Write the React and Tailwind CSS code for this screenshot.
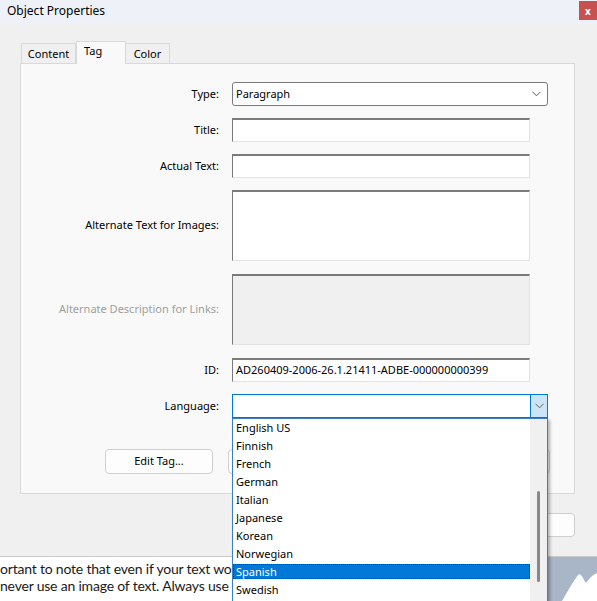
import React from "react";

const languages = [
  "English US",
  "Finnish",
  "French",
  "German",
  "Italian",
  "Japanese",
  "Korean",
  "Norwegian",
  "Spanish",
  "Swedish",
];

function Chevron({ className = "" }) {
  return (
    <svg width="9" height="6" viewBox="0 0 9 6" className={className}>
      <path d="M0.5 0.8 L4.5 4.8 L8.5 0.8" fill="none" stroke="#5f5f5f" strokeWidth="1" />
    </svg>
  );
}

function Field({ label, disabled, children, className = "" }) {
  return (
    <div className={`flex items-center ${className}`}>
      <div className={`w-[199px] text-right pr-px ${disabled ? "text-[#a0a0a0]" : "text-black"}`}>{label}</div>
      <div className="ml-[12px]">{children}</div>
    </div>
  );
}

function SunkenBox({ h = "h-[24px]", disabled, children }) {
  return (
    <div
      className={`w-[298px] ${h} border-t-2 border-l border-r border-b border-t-[#7a7a7a] border-l-[#7a7a7a] border-r-[#e3e3e3] border-b-[#e3e3e3] ${
        disabled ? "bg-[#f0f0f0]" : "bg-white"
      } px-[3px] flex items-center`}
    >
      {children}
    </div>
  );
}

function LanguageList() {
  return (
    <div className="absolute left-0 top-full w-[316px] h-[200px] bg-white border border-[#3b7fc0] shadow-[2px_2px_3px_rgba(0,0,0,0.3)] z-20 flex">
      <div className="flex-1">
        {languages.map((l) => (
          <div key={l} className="h-[18px] pt-[1px]">
            {l === "Spanish" ? (
              <div className="h-[15px] leading-[13px] pl-[2px] bg-[#0078d7] text-white border border-dotted border-[#1b3b5c]">{l}</div>
            ) : (
              <div className="h-[15px] leading-[15px] pl-[3px]">{l}</div>
            )}
          </div>
        ))}
      </div>
      <div className="w-[17px] bg-[#f0f0f0] flex justify-center">
        <div className="w-[3px] h-[91px] mt-[72px] rounded-full bg-[#888888]" />
      </div>
    </div>
  );
}

export default function App() {
  return (
    <div className="w-[597px] h-[601px] overflow-hidden bg-white font-['Noto_Sans',sans-serif] text-[11px] text-black flex flex-col">
      <div className="h-[557px] shrink-0 flex flex-col bg-[#f0f0f0] border-b border-[#c9c9c9]">
        <div className="h-[23px] shrink-0 flex justify-between bg-[#eef2f8]">
          <span className="pl-[7px] pt-[2px] text-[12px]">Object Properties</span>
          <div className="w-[18px] h-[19px] mt-px bg-[#c75050] text-white font-bold text-[10px] flex items-center justify-center leading-none">
            x
          </div>
        </div>

        <div className="flex-1 pl-[20px] pr-[22px] pt-[18px] flex flex-col">
          <div className="h-[22px] flex items-end pl-px">
            <div className="h-[20px] w-[55px] border border-b-0 border-[#d9d9d9] bg-[#f0f0f0] flex items-center justify-center pt-px">
              Content
            </div>
            <div className="h-[23px] w-[50px] -mb-px relative z-10 border border-b-0 border-[#d9d9d9] bg-[#f9f9f9] pl-[7px] pt-[1px]">
              Tag
            </div>
            <div className="h-[20px] w-[44px] border border-b-0 border-l-0 border-[#d9d9d9] bg-[#f0f0f0] flex items-center justify-center pt-px">
              Color
            </div>
          </div>

          <div className="h-[431px] border border-[#d9d9d9] bg-[#f9f9f9] pt-[18px]">
            <Field label="Type:">
              <div className="w-[316px] h-[24px] border border-[#7a7a7a] rounded-[3px] bg-white flex items-center justify-between pl-[3px] pr-[6px]">
                <span>Paragraph</span>
                <Chevron />
              </div>
            </Field>
            <Field label="Title:" className="mt-[12px]">
              <SunkenBox />
            </Field>
            <Field label="Actual Text:" className="mt-[12px]">
              <SunkenBox />
            </Field>
            <Field label="Alternate Text for Images:" className="mt-[12px]">
              <SunkenBox h="h-[71px]" />
            </Field>
            <Field label="Alternate Description for Links:" disabled className="mt-[13px]">
              <SunkenBox h="h-[71px]" disabled />
            </Field>
            <Field label="ID:" className="mt-[13px]">
              <SunkenBox>
                <span>AD260409-2006-26.1.21411-ADBE-000000000399</span>
              </SunkenBox>
            </Field>
            <Field label="Language:" className="mt-[12px]">
              <div className="relative">
                <div className="w-[316px] h-[24px] border border-[#0078d4] bg-white flex justify-end">
                  <div className="w-[17px] h-full bg-[#cce4f7] border-l border-[#0078d4] flex items-center justify-center">
                    <Chevron />
                  </div>
                </div>
                <LanguageList />
              </div>
            </Field>
            <div className="mt-[31px] pl-[84px] flex gap-[15px]">
              <div className="w-[108px] h-[25px] rounded-[4px] border border-[#cfcfcf] bg-[#fdfdfd] flex items-center justify-center">
                Edit Tag...
              </div>
              <div className="w-[322px] h-[25px] rounded-[4px] border border-[#cfcfcf] bg-[#fdfdfd]" />
            </div>
          </div>

          <div className="mt-[19px] flex justify-end">
            <div className="w-[80px] h-[24px] rounded-[4px] border border-[#cfcfcf] bg-[#fdfdfd]" />
          </div>
        </div>
      </div>

      <div className="flex-1 flex">
        <div className="w-[548px] overflow-hidden font-['Lato',sans-serif] text-[14px] leading-[17px] text-[#1a1a1a] pt-[3px] whitespace-nowrap tracking-[-0.2px]">
          <div>ortant to note that even if your text would look the same, you should</div>
          <div>never use an image of text. Always use real text so that screen readers work</div>
          <div className="mt-[4px] text-[#9a9a9a]">This will allow for responsive and accessible pages</div>
        </div>
        <div className="flex-1 bg-[#a9b6c8]">
          <svg width="49" height="44" viewBox="0 0 49 44">
            <path d="M14 44 C20 34 24 26 30 18 C33 15 35 22 38 26 C41 22 44 18 49 16 L49 44 Z" fill="#ffffff" />
          </svg>
        </div>
      </div>
    </div>
  );
}
